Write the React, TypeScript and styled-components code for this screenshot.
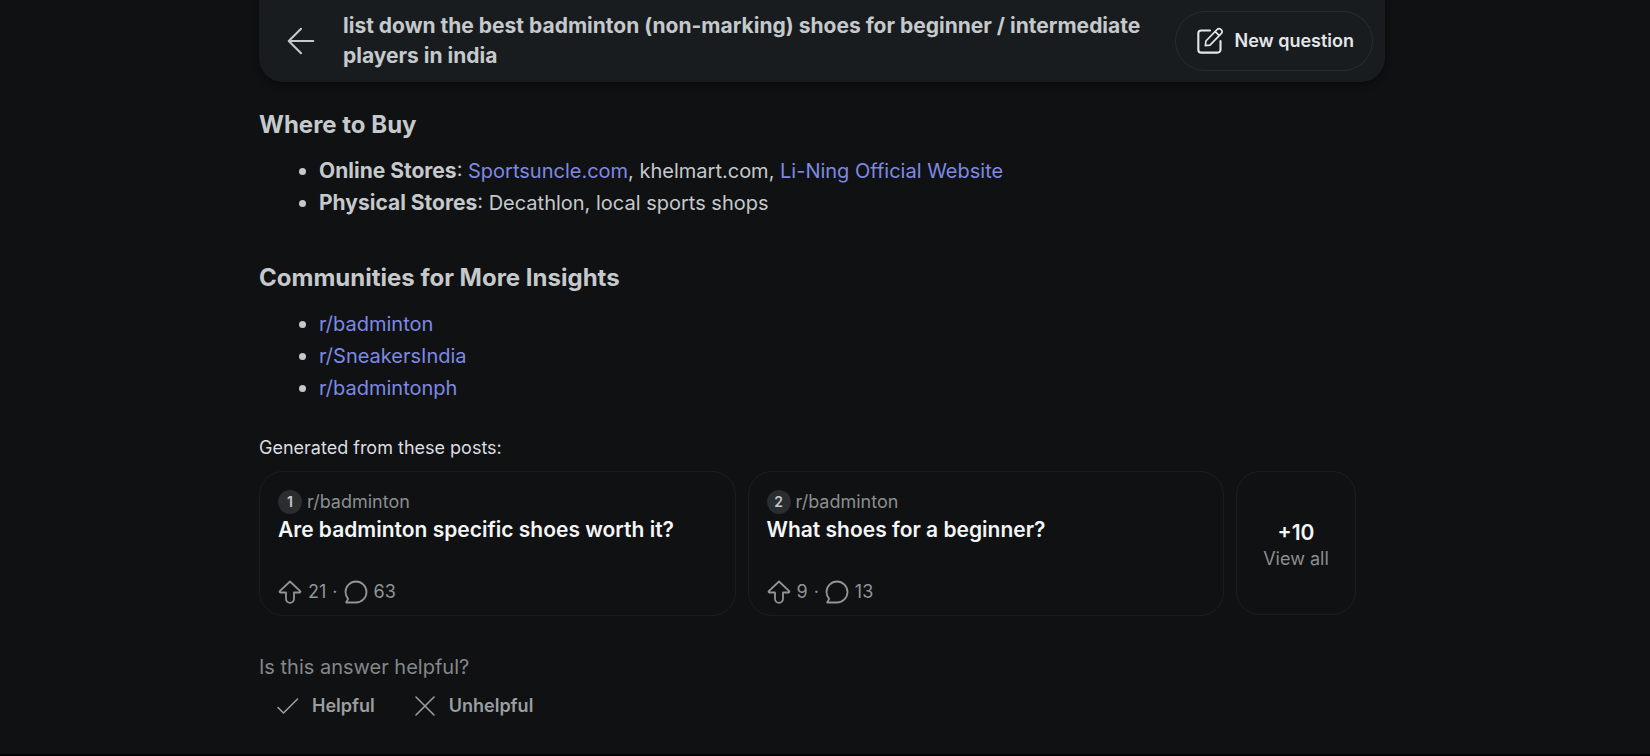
import React from "react";
import styled, { createGlobalStyle } from "styled-components";

const Global = createGlobalStyle`
  *, *::before, *::after { box-sizing: border-box; }
  body {
    margin: 0;
    background: #0f1113;
    color: #c6c9cb;
    font-family: Inter, "Liberation Sans", sans-serif;
    font-size: 20px;
    line-height: 32px;
  }
  button { font: inherit; color: inherit; background: none; border: 0; padding: 0; cursor: pointer; }
  a { text-decoration: none; }
  svg { display: block; flex: none; }
`;

const Page = styled.div`
  min-height: 100vh;
  padding: 0 265px 0 259px;
  border-bottom: 2px solid #020304;
  @media (max-width: 1200px) { padding: 0 24px; }
`;

const Header = styled.header`
  display: flex;
  align-items: center;
  min-height: 82px;
  padding: 0 12px 0 28px;
  background: #181c1f;
  border-radius: 0 0 24px 24px;
  box-shadow: 0 2px 6px #080a0b;
`;

const BackButton = styled.button`
  display: flex;
  margin-right: 28px;
`;

const Query = styled.h1`
  flex: 1;
  margin: 0;
  font-size: 21px;
  line-height: 30px;
  font-weight: 700;
`;

const NewQuestion = styled.button`
  display: flex;
  align-items: center;
  gap: 10px;
  height: 60px;
  padding: 0 18px 0 20px;
  margin-left: 24px;
  border: 1px solid #282c2f;
  border-radius: 30px;
  color: #e4e7e9;
  font-size: 18px;
  font-weight: 600;
  white-space: nowrap;
`;

const Section = styled.section`
  margin-bottom: 44px;
  &:first-child { margin-top: 28px; }
  &:last-of-type { margin-bottom: 32px; }
`;

const Heading = styled.h2`
  margin: 0 0 15px;
  font-size: 24px;
  line-height: 30px;
  font-weight: 700;
`;

const List = styled.ul`
  margin: 0;
  padding-left: 60px;
  strong { font-size: 21px; line-height: 30px; }
  li::marker { font-size: 21px; }
`;

const TextLink = styled.a`
  color: #7f89e3;
`;

const Caption = styled.p`
  margin: 0 0 11px;
  color: #dcdee0;
  font-size: 18px;
  line-height: 24px;
`;

const Posts = styled.div`
  display: flex;
  gap: 12px;
  margin-right: 29px;
`;

const Card = styled.article`
  flex: 1;
  display: flex;
  flex-direction: column;
  height: 145px;
  padding: 18px 18px 11px;
  border: 1px solid #1b1d1f;
  border-radius: 24px;
`;

const Source = styled.div`
  display: flex;
  align-items: center;
  gap: 5px;
  color: #8b8e90;
  font-size: 18px;
  line-height: 24px;
`;

const Badge = styled.span`
  width: 24px;
  height: 24px;
  border-radius: 50%;
  background: #2b2e31;
  color: #c6c9cb;
  font-size: 14px;
  font-weight: 600;
  text-align: center;
`;

const PostTitle = styled.h3`
  margin: 0;
  color: #f4f5f6;
  font-size: 21px;
  line-height: 32px;
  font-weight: 600;
`;

const Stats = styled.div`
  display: flex;
  align-items: center;
  gap: 6px;
  margin-top: auto;
  color: #929596;
  font-size: 18px;
  line-height: 24px;
`;

const ViewAll = styled.button`
  display: flex;
  flex-direction: column;
  align-items: center;
  justify-content: center;
  width: 120px;
  height: 144px;
  padding-top: 4px;
  border: 1px solid #1b1d1f;
  border-radius: 24px;
  color: #8b8e90;
  font-size: 18px;
  line-height: 24px;
  strong { color: #f4f5f6; font-size: 21px; line-height: 28px; font-weight: 600; }
`;

const Prompt = styled.p`
  margin: 35px 0 7px;
  color: #85888a;
`;

const Actions = styled.div`
  display: flex;
  gap: 38px;
  padding-left: 17px;
`;

const Vote = styled.button`
  display: flex;
  align-items: center;
  gap: 12px;
  color: #9b9ea0;
  font-size: 18px;
  font-weight: 600;
`;

const Icon = ({ size = 24, width = 2, children }: { size?: number; width?: number; children: React.ReactNode }) => (
  <svg width={size} height={size} viewBox="0 0 24 24" fill="none" stroke="currentColor"
    strokeWidth={width} strokeLinecap="round" strokeLinejoin="round" aria-hidden="true">
    {children}
  </svg>
);

type Post = { id: number; title: string; votes: number; comments: number };

const posts: Post[] = [
  { id: 1, title: "Are badminton specific shoes worth it?", votes: 21, comments: 63 },
  { id: 2, title: "What shoes for a beginner?", votes: 9, comments: 13 },
];

const PostCard = ({ post }: { post: Post }) => (
  <Card>
    <Source><Badge>{post.id}</Badge>r/badminton</Source>
    <PostTitle>{post.title}</PostTitle>
    <Stats>
      <Icon width={1.8}>
        <path d="M12 1.500 1.800 11.200c-.5.5-.2 1.300.5 1.300H8v6.300a4 4 0 0 0 8 0v-6.300h5.700c.7 0 1-.8.5-1.300Z" />
      </Icon>
      <span>{post.votes}</span>
      <span>·</span>
      <Icon width={1.8}>
        <path d="M2.200 22.500H12A10.500 10.500 0 1 0 1.500 12c0 2.700 1 5.100 2.600 6.900Z" />
      </Icon>
      <span>{post.comments}</span>
    </Stats>
  </Card>
);

export default function App() {
  return (
    <>
      <Global />
      <Page>
        <Header>
          <BackButton aria-label="Back">
            <Icon size={28} width={1.8}><path d="M22.500 12H1.500M12 1.500 1.500 12 12 22.500" /></Icon>
          </BackButton>
          <Query>
            list down the best badminton (non-marking) shoes for beginner / intermediate players in india
          </Query>
          <NewQuestion>
            <Icon size={28} width={1.8}>
              <path d="M12 3H4.500A2.500 2.500 0 0 0 2 5.500v14A2.500 2.500 0 0 0 4.500 22h14a2.500 2.500 0 0 0 2.500-2.500V12" />
              <path strokeWidth="1.400" d="m8 16 .5-4L18 2.300a2.400 2.400 0 0 1 3.600 3.400L12 15.500ZM16.500 3.900l3.500 3.500" />
            </Icon>
            New question
          </NewQuestion>
        </Header>
        <main>
          <Section>
            <Heading>Where to Buy</Heading>
            <List>
              <li>
                <strong>Online Stores</strong>: <TextLink href="#sportsuncle">Sportsuncle.com</TextLink>, khelmart.com,{" "}
                <TextLink href="#li-ning">Li-Ning Official Website</TextLink>
              </li>
              <li><strong>Physical Stores</strong>: Decathlon, local sports shops</li>
            </List>
          </Section>
          <Section>
            <Heading>Communities for More Insights</Heading>
            <List>
              {["r/badminton", "r/SneakersIndia", "r/badmintonph"].map((name) => (
                <li key={name}><TextLink href={`#${name}`}>{name}</TextLink></li>
              ))}
            </List>
          </Section>
          <Caption>Generated from these posts:</Caption>
          <Posts>
            {posts.map((post) => <PostCard key={post.id} post={post} />)}
            <ViewAll><strong>+10</strong>View all</ViewAll>
          </Posts>
          <Prompt>Is this answer helpful?</Prompt>
          <Actions>
            <Vote>
              <Icon width={1.6}><path d="m2 13.500 5.500 5.500L21.500 5" /></Icon>
              Helpful
            </Vote>
            <Vote>
              <Icon width={1.6}><path d="m3 3 18 18M21 3 3 21" /></Icon>
              Unhelpful
            </Vote>
          </Actions>
        </main>
      </Page>
    </>
  );
}
